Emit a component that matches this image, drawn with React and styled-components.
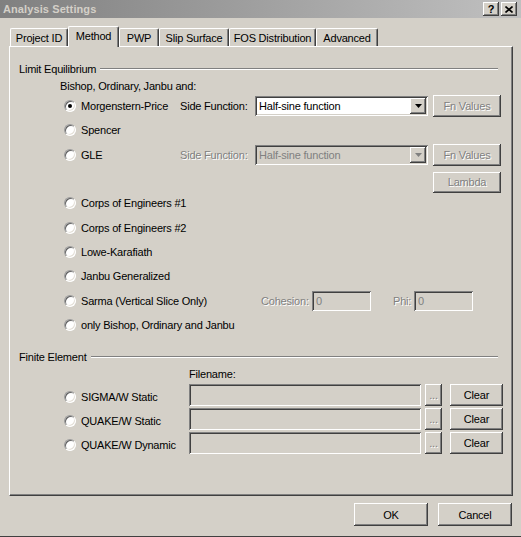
import React from "react";
import styled, { createGlobalStyle, css } from "styled-components";

const Global = createGlobalStyle`
  html, body { margin: 0; padding: 0; background: #d4d0c8; }
  body { font-family: "Liberation Sans", Arial, sans-serif; font-size: 11px; letter-spacing: -0.2px; color: #000; }
  * { box-sizing: border-box; }
`;

const raised = css`
  background: #d4d0c8;
  box-shadow: inset -1px -1px #404040, inset 1px 1px #ffffff, inset -2px -2px #808080, inset 2px 2px #d4d0c8;
`;

const sunken = css`
  box-shadow: inset 1px 1px #808080, inset -1px -1px #ffffff, inset 2px 2px #404040, inset -2px -2px #d4d0c8;
`;

const disabledText = css`
  color: #808080;
  text-shadow: 1px 1px 0 #ffffff;
`;

const Window = styled.div`
  width: 521px;
  height: 537px;
  display: flex;
  flex-direction: column;
  background: #d4d0c8;
  border-bottom: 1px solid #404040;
`;

const TitleBar = styled.div`
  height: 18px;
  flex: none;
  display: flex;
  align-items: center;
  justify-content: space-between;
  padding: 0 4px 0 3px;
  background: linear-gradient(to right, #808080, #c0c0c0);
`;

const Title = styled.div`
  font-weight: bold;
  font-size: 11px;
  letter-spacing: 0.1px;
  color: #d4d0c8;
`;

const TitleButtons = styled.div`
  display: flex;
  gap: 2px;
`;

const CaptionButton = styled.div`
  ${raised};
  width: 16px;
  height: 14px;
  display: flex;
  align-items: center;
  justify-content: center;
  font-weight: bold;
  font-size: 11px;
  line-height: 1;
`;

const TabStrip = styled.div`
  display: flex;
  align-items: flex-end;
  margin: 8px 0 0 10px;
  height: 20px;
`;

const Tab = styled.div`
  position: relative;
  width: ${(p) => p.$w}px;
  height: ${(p) => (p.$active ? 21 : 18)}px;
  margin-bottom: ${(p) => (p.$active ? -1 : 0)}px;
  z-index: ${(p) => (p.$active ? 2 : 1)};
  background: #d4d0c8;
  border-top: 1px solid #ffffff;
  border-left: 1px solid #ffffff;
  border-right: 1px solid #404040;
  border-radius: 2px 2px 0 0;
  box-shadow: inset -1px 0 #808080;
  display: flex;
  align-items: center;
  justify-content: center;
  padding-bottom: ${(p) => (p.$active ? 3 : 0)}px;
  white-space: nowrap;
`;

const Panel = styled.div`
  margin-left: 9px;
  width: 504px;
  height: 450px;
  flex: none;
  border: 1px solid;
  border-color: #ffffff #404040 #404040 #ffffff;
  box-shadow: inset -1px -1px #808080;
  padding: 15px 14px 0 9px;
  display: flex;
  flex-direction: column;
`;

const GroupHeader = styled.div`
  display: flex;
  align-items: center;
  height: 14px;
  margin-top: ${(p) => p.$mt || 0}px;
  white-space: nowrap;
`;

const Etch = styled.div`
  flex: 1;
  margin-left: 4px;
  border-top: 1px solid #808080;
  border-bottom: 1px solid #ffffff;
`;

const SubLabel = styled.div`
  height: 14px;
  line-height: 14px;
  margin-top: 3px;
  padding-left: ${(p) => p.$indent}px;
`;

const RadioList = styled.div`
  margin-top: 1px;
  padding-left: 45px;
  display: flex;
  flex-direction: column;
`;

const Row = styled.div`
  display: flex;
  align-items: center;
  height: 24.33px;
`;

const FeList = styled.div`
  margin-top: 3px;
  padding-left: 45px;
  display: flex;
  flex-direction: column;
  gap: 2px;
`;

const FeRow = styled.div`
  display: flex;
  align-items: center;
  height: 22px;
`;

const RadioOption = styled.div`
  width: ${(p) => p.$w}px;
  flex: none;
  display: flex;
  align-items: center;
  gap: 5px;
  white-space: nowrap;
  padding-top: ${(p) => p.$drop || 0}px;
`;

const RadioCircle = styled.div`
  width: 12px;
  height: 12px;
  flex: none;
  border-radius: 50%;
  border: 1px solid;
  border-color: #9a9a9a #ffffff #ffffff #9a9a9a;
  background: #ffffff;
  box-shadow: inset 1px 1px #606060, inset -1px -1px #e4e0d8;
  display: flex;
  align-items: center;
  justify-content: center;
  &::after {
    content: "";
    display: ${(p) => (p.$checked ? "block" : "none")};
    width: 4px;
    height: 4px;
    border-radius: 50%;
    background: #000;
  }
`;

const FieldLabel = styled.div`
  width: ${(p) => p.$w}px;
  flex: none;
  margin-left: ${(p) => p.$ml || 0}px;
  white-space: nowrap;
  ${(p) => p.$disabled && disabledText};
`;

const Select = styled.div`
  ${sunken};
  width: ${(p) => p.$w}px;
  height: 20px;
  flex: none;
  background: ${(p) => (p.$disabled ? "#d4d0c8" : "#ffffff")};
  display: flex;
  align-items: center;
  padding: 2px 2px 2px 4px;
`;

const SelectText = styled.div`
  flex: 1;
  white-space: nowrap;
  ${(p) => p.$disabled && "color: #808080;"};
`;

const ArrowButton = styled.div`
  ${raised};
  width: 16px;
  height: 16px;
  display: flex;
  align-items: center;
  justify-content: center;
`;

const Button = styled.div`
  ${raised};
  width: ${(p) => p.$w}px;
  height: ${(p) => p.$h || 22}px;
  flex: none;
  margin-left: ${(p) => p.$ml || 0}px;
  margin-top: ${(p) => p.$mt || 0}px;
  display: flex;
  align-items: center;
  justify-content: center;
  white-space: nowrap;
  ${(p) => p.$disabled && disabledText};
`;

const Input = styled.div`
  ${sunken};
  width: ${(p) => p.$w}px;
  height: ${(p) => p.$h || 20}px;
  flex: none;
  background: #d4d0c8;
  display: flex;
  align-items: center;
  padding: 0 4px;
  color: #808080;
`;

const Footer = styled.div`
  display: flex;
  justify-content: flex-end;
  gap: 10px;
  padding: 7px 9px 0 0;
`;

const Arrow = ({ disabled }) => (
  <svg width="7" height="4" viewBox="0 0 7 4">
    <path d="M0 0h7L3.5 4z" fill={disabled ? "#808080" : "#000"} />
  </svg>
);

const Radio = ({ label, checked, w, drop }) => (
  <RadioOption $w={w} $drop={drop}>
    <RadioCircle $checked={checked} />
    <span>{label}</span>
  </RadioOption>
);

const tabs = [
  ["Project ID", 58],
  ["Method", 51],
  ["PWP", 40],
  ["Slip Surface", 70],
  ["FOS Distribution", 87],
  ["Advanced", 62],
];

const simpleMethods = [
  "Corps of Engineers #1",
  "Corps of Engineers #2",
  "Lowe-Karafiath",
  "Janbu Generalized",
];

const feMethods = ["SIGMA/W Static", "QUAKE/W Static", "QUAKE/W Dynamic"];

export default function App() {
  return (
    <>
      <Global />
      <Window>
        <TitleBar>
          <Title>Analysis Settings</Title>
          <TitleButtons>
            <CaptionButton>?</CaptionButton>
            <CaptionButton>
              <svg width="8" height="7" viewBox="0 0 8 7">
                <path d="M0.5 0.5L7.5 6.5M7.5 0.5L0.5 6.5" stroke="#000" strokeWidth="1.6" />
              </svg>
            </CaptionButton>
          </TitleButtons>
        </TitleBar>

        <TabStrip>
          {tabs.map(([t, w]) => (
            <Tab key={t} $w={w} $active={t === "Method"}>
              {t}
            </Tab>
          ))}
        </TabStrip>

        <Panel>
          <GroupHeader>
            Limit Equilibrium
            <Etch />
          </GroupHeader>
          <SubLabel $indent={41}>Bishop, Ordinary, Janbu and:</SubLabel>
          <RadioList>
            <Row>
              <Radio label="Morgenstern-Price" checked w={116} />
              <FieldLabel $w={75}>Side Function:</FieldLabel>
              <Select $w={173}>
                <SelectText>Half-sine function</SelectText>
                <ArrowButton>
                  <Arrow />
                </ArrowButton>
              </Select>
              <Button $w={68} $ml={5} $disabled>
                Fn Values
              </Button>
            </Row>
            <Row>
              <Radio label="Spencer" w={116} />
            </Row>
            <Row>
              <Radio label="GLE" w={116} />
              <FieldLabel $w={75} $disabled>
                Side Function:
              </FieldLabel>
              <Select $w={173} $disabled>
                <SelectText $disabled>Half-sine function</SelectText>
                <ArrowButton>
                  <Arrow disabled />
                </ArrowButton>
              </Select>
              <Button $w={68} $ml={5} $disabled>
                Fn Values
              </Button>
            </Row>
            <Row>
              <Button $w={68} $h={21} $ml={369} $mt={6} $disabled>
                Lambda
              </Button>
            </Row>
            {simpleMethods.map((m) => (
              <Row key={m}>
                <Radio label={m} w={116} />
              </Row>
            ))}
            <Row>
              <Radio label="Sarma (Vertical Slice Only)" w={197} />
              <FieldLabel $w={51} $disabled>
                Cohesion:
              </FieldLabel>
              <Input $w={59}>0</Input>
              <FieldLabel $w={21} $ml={22} $disabled>
                Phi:
              </FieldLabel>
              <Input $w={59}>0</Input>
            </Row>
            <Row>
              <Radio label="only Bishop, Ordinary and Janbu" w={300} />
            </Row>
          </RadioList>

          <GroupHeader $mt={13}>
            Finite Element
            <Etch />
          </GroupHeader>
          <SubLabel $indent={170}>Filename:</SubLabel>
          <FeList>
            {feMethods.map((m) => (
              <FeRow key={m}>
                <Radio label={m} w={125} drop={3} />
                <Input $w={232} $h={22} />
                <Button $w={17} $ml={4} $disabled>
                  ...
                </Button>
                <Button $w={53} $ml={8}>
                  Clear
                </Button>
              </FeRow>
            ))}
          </FeList>
        </Panel>

        <Footer>
          <Button $w={74} $h={23}>
            OK
          </Button>
          <Button $w={74} $h={23}>
            Cancel
          </Button>
        </Footer>
      </Window>
    </>
  );
}
